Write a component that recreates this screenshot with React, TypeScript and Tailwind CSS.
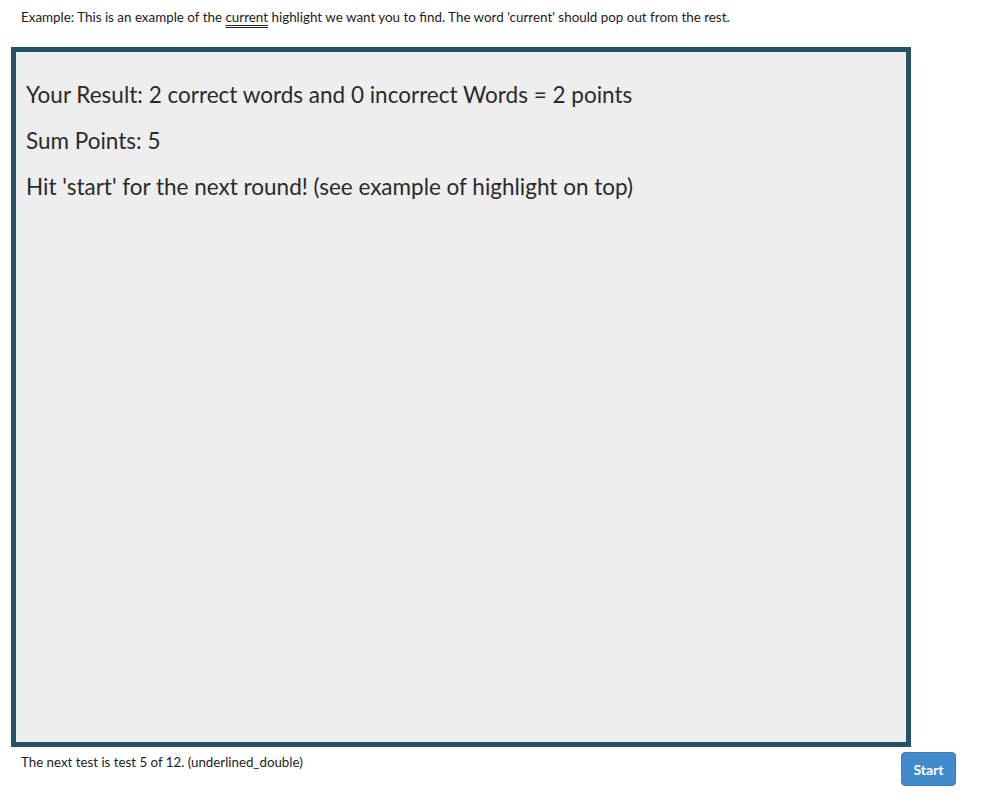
import React from 'react';

const lines = [
  'Your Result: 2 correct words and 0 incorrect Words = 2 points',
  'Sum Points: 5',
  "Hit 'start' for the next round! (see example of highlight on top)",
];

const App: React.FC = () => {
  return (
    <div className="w-[990px] h-[807px] bg-white text-[#222] pl-[11px] font-['Lato',sans-serif]">
      <p className="pl-[10px] pt-[9px] h-[47px] text-[13.4px] leading-[16px]">
        Example: This is an example of the{' '}
        <span className="underline decoration-double decoration-1 underline-offset-[3px]">current</span>{' '}
        highlight we want you to find. The word 'current' should pop out from the rest.
      </p>

      <div className="w-[900px] h-[700px] border-[5px] border-[#245266] bg-[#eeeeee] px-[10px] pt-[28px] flex flex-col gap-[16px]">
        {lines.map((l) => (
          <h3 key={l} className="text-[22.5px] leading-[30px] text-[#2a2a2a]">
            {l}
          </h3>
        ))}
      </div>

      <div className="w-[945px] flex justify-between items-start pt-[5px]">
        <p className="pl-[10px] pt-[2px] text-[13.3px] leading-[16px]">
          The next test is test 5 of 12. (underlined_double)
        </p>
        <button className="w-[55px] h-[34px] rounded-[4px] bg-[#428bca] border border-[#3a7dbb] text-white text-[14px] font-bold">
          Start
        </button>
      </div>
    </div>
  );
};

export default App;
